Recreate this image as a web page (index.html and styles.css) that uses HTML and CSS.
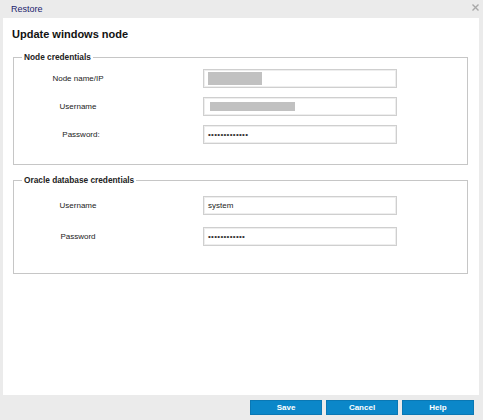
FILE: index.html
```html
<!DOCTYPE html>
<html>
<head>
<meta charset="utf-8">
<link rel="stylesheet" href="styles.css">
</head>
<body>
<div class="dialog">
  <div class="titlebar">
    <span class="title">Restore</span>
    <svg class="close" width="7" height="7" viewBox="0 0 7 7"><path d="M0.5 0.5L6.5 6.5M6.5 0.5L0.5 6.5" stroke="#a8a8a8" stroke-width="1.4"/></svg>
  </div>
  <div class="panel">
    <h1 class="heading">Update windows node</h1>
    <fieldset class="group group-node">
      <legend class="legend">Node credentials</legend>
      <div class="form-grid">
        <label class="label">Node name/IP</label>
        <div class="field"><span class="redact redact-1"></span></div>
        <label class="label">Username</label>
        <div class="field"><span class="redact redact-2"></span></div>
        <label class="label label-shift">Password:</label>
        <div class="field"><span class="dots">•••••••••••••</span></div>
      </div>
    </fieldset>
    <fieldset class="group group-oracle">
      <legend class="legend">Oracle database credentials</legend>
      <div class="form-grid form-grid-wide">
        <label class="label">Username</label>
        <div class="field"><span class="value">system</span></div>
        <label class="label">Password</label>
        <div class="field"><span class="dots">••••••••••••</span></div>
      </div>
    </fieldset>
  </div>
  <div class="footer">
    <button class="btn">Save</button>
    <button class="btn">Cancel</button>
    <button class="btn">Help</button>
  </div>
</div>
</body>
</html>
```
FILE: styles.css
```css
html, body {
  margin: 0;
  padding: 0;
}
body {
  background: #ebebeb;
  font-family: "Liberation Sans", Arial, sans-serif;
  color: #222;
}
.dialog {
  width: 483px;
  height: 420px;
  display: flex;
  flex-direction: column;
  background: #ebebeb;
}
.titlebar {
  height: 18px;
  display: flex;
  align-items: center;
  justify-content: space-between;
  padding: 0 4px 0 11px;
  box-sizing: border-box;
}
.title {
  font-size: 9px;
  color: #1d1d6e;
  line-height: 11px;
  margin-top: 1px;
}
.close {
  display: block;
  margin-top: -4px;
}
.panel {
  flex: 1;
  background: #fff;
  margin: 0 4px 0 3px;
  padding-top: 10px;
  box-sizing: border-box;
}
.heading {
  margin: 0 0 11px 9px;
  font-size: 11px;
  line-height: 13px;
  font-weight: bold;
  color: #111;
}
.group {
  margin: 0 11px 0 10px;
  padding: 0;
  border: 1px solid #c6c6c6;
  min-width: 0;
}
.group-node {
  padding: 7px 0 20px 0;
}
.group-oracle {
  margin-top: 10px;
  padding: 11px 0 27px 0;
}
.legend {
  margin-left: 8px;
  padding: 0 2px;
  font-size: 8.3px;
  line-height: 10px;
  font-weight: bold;
  color: #222;
}
.form-grid {
  display: grid;
  grid-template-columns: 128px 194px;
  column-gap: 61px;
  row-gap: 9px;
  align-items: center;
}
.form-grid-wide {
  row-gap: 12px;
}
.label {
  font-size: 8px;
  text-align: center;
  color: #222;
}
.label-shift {
  padding-left: 6px;
}
.field {
  height: 19px;
  box-sizing: border-box;
  border: 1px solid #cfcfcf;
  box-shadow: inset 0 0 0 1px #eeeeee;
  display: flex;
  align-items: center;
  padding-left: 4px;
  background: #fff;
}
.redact {
  display: block;
  background: #c1c1c1;
}
.redact-1 {
  width: 54px;
  height: 13px;
  margin-left: 0;
}
.redact-2 {
  width: 85px;
  height: 9px;
  margin-left: 2px;
}
.value {
  font-size: 8px;
  color: #222;
}
.dots {
  font-size: 8px;
  letter-spacing: 0.3px;
  color: #333;
  line-height: 8px;
}
.footer {
  height: 25px;
  display: flex;
  justify-content: flex-end;
  align-items: flex-start;
  gap: 4px;
  padding: 5px 9px 0 0;
  box-sizing: border-box;
}
.btn {
  width: 72px;
  height: 15px;
  margin: 0;
  padding: 0;
  border: 1px solid #0a78b4;
  background: #0b87c9;
  color: #fff;
  font-family: "Liberation Sans", Arial, sans-serif;
  font-size: 8px;
  font-weight: bold;
  line-height: 13px;
}
```
